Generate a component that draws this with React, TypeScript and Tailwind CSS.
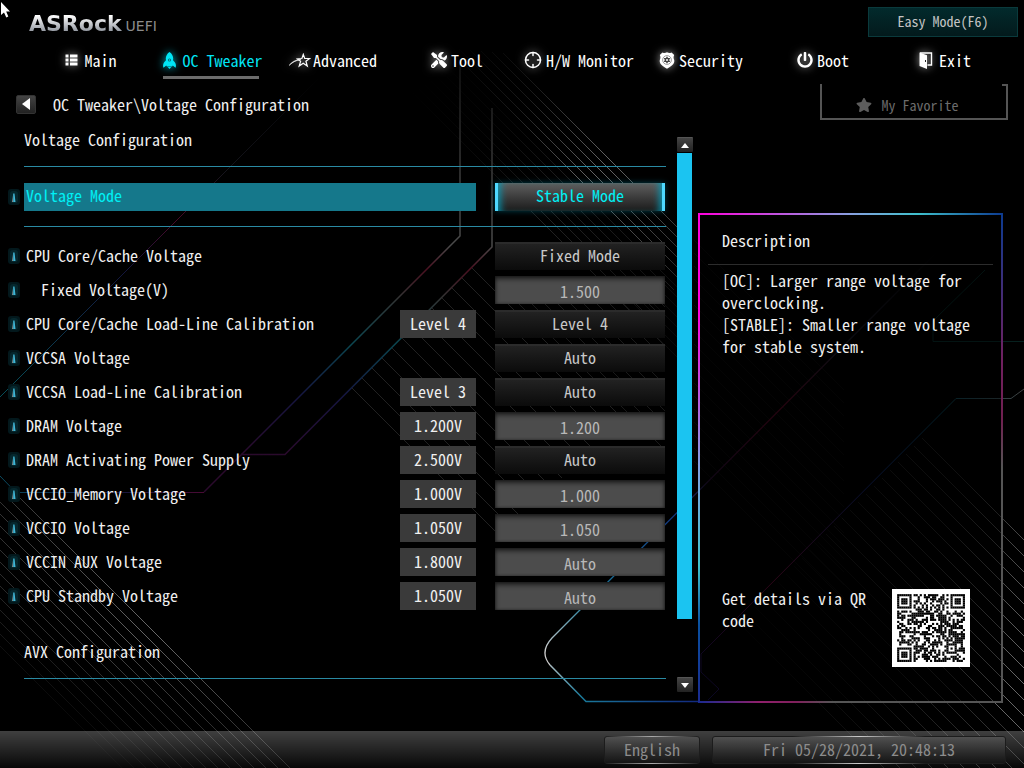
import React from "react";
import { Crosshair } from "lucide-react";
import { FaPowerOff, FaStar, FaTools } from "react-icons/fa";

const GLOW = "shrink-0 drop-shadow-[0_0_4px_rgba(255,255,255,0.6)]";

function ListIcon() {
  return (
    <svg className={GLOW} width="13" height="12" viewBox="0 0 13 12" fill="#fff" aria-hidden="true">
      {[0, 4, 8].map((y) => (
        <g key={y}>
          <rect x="0.5" y={y + 0.5} width="3" height="3" />
          <rect x="5" y={y + 0.5} width="7.5" height="3" />
        </g>
      ))}
    </svg>
  );
}

function RocketIcon() {
  return (
    <svg
      className="shrink-0 drop-shadow-[0_0_4px_rgba(0,229,255,0.8)]"
      width="13"
      height="17"
      viewBox="0 0 13 17"
      fill="#00e5f5"
      aria-hidden="true"
    >
      <path
        fillRule="evenodd"
        d="M6.5 0C8.800 1.600 10.200 4 10.200 6.500L10 8.200 12 10.400C12.900 11.600 13.300 13.800 12.500 15.800L9.800 13.600 9 14.400H4L3.200 13.600.5 15.800C-.3 13.800.1 11.600 1 10.400L3 8.200 2.800 6.500C2.800 4 4.200 1.600 6.500 0ZM6.500 6.400A1.600 1.600 0 1 0 6.500 9.600 1.600 1.600 0 1 0 6.500 6.400Z"
      />
      <circle cx="6.5" cy="8" r="0.8" />
      <path d="M4.800 15H8.200L6.500 17Z" />
    </svg>
  );
}

function ShootingStarIcon() {
  return (
    <svg className={GLOW} width="22" height="15" viewBox="0 0 22 15" fill="none" stroke="#fff" aria-hidden="true">
      <path
        d="M14.3 1.4 15.7 5.4 20.6 5.5 16.9 8.2 18.3 13 14.2 10.3 10.2 13 11.6 8.3 8.4 6 12.9 5.5Z"
        strokeWidth="1.2"
      />
      <path d="M0 12.6C2.8 8.6 6.6 6.5 12 6.4 7 7.4 3.4 9.2 0 12.6Z" fill="#fff" strokeWidth="0.5" />
    </svg>
  );
}

function BadgeIcon() {
  return (
    <svg className={GLOW} width="16" height="17" viewBox="0 0 16 17" aria-hidden="true">
      <path
        d="M3.500 .5C5 1.300 6.600 1.200 8 .3 9.400 1.200 11 1.300 12.500 .5L15.200 3C14.300 4.800 14.400 6.200 15.200 8 16 11.500 12.600 14.300 8 16.700 3.400 14.300 0 11.500 .8 8 1.600 6.200 1.700 4.800 .8 3Z"
        fill="#fff"
      />
      <circle cx="8" cy="8" r="4.400" fill="none" stroke="#777" strokeWidth="0.700" />
      <path
        d="M8 4.200 9.100 6.100 11.300 6.100 10.200 8 11.300 9.900 9.100 9.900 8 11.800 6.900 9.900 4.700 9.900 5.800 8 4.700 6.100 6.900 6.100Z"
        fill="#444"
      />
      <circle cx="8" cy="8" r="1" fill="#fff" />
    </svg>
  );
}

function DoorIcon() {
  return (
    <svg className={GLOW} width="14" height="17" viewBox="0 0 14 17" aria-hidden="true">
      <path d="M1 1H12.500V13H8.500" fill="none" stroke="#fff" strokeWidth="1.400" />
      <path d="M.5.5 8 3.200V17L.5 14Z" fill="#fff" />
      <rect x="6" y="8" width="1" height="2" fill="#222" />
    </svg>
  );
}

const NAV: { label: string; icon: React.ReactNode; active?: boolean; gap?: string }[] = [
  { label: "Main", icon: <ListIcon />, gap: "gap-[6px]" },
  { label: "OC Tweaker", icon: <RocketIcon />, active: true, gap: "gap-[6px]" },
  { label: "Advanced", icon: <ShootingStarIcon />, gap: "gap-0.5 pr-1" },
  { label: "Tool", icon: <FaTools className={GLOW} size={16} /> },
  { label: "H/W Monitor", icon: <Crosshair className={GLOW} size={18} strokeWidth={2} /> },
  { label: "Security", icon: <BadgeIcon /> },
  { label: "Boot", icon: <FaPowerOff className={GLOW} size={16} /> },
  { label: "Exit", icon: <DoorIcon />, gap: "gap-[6px]" },
];

type Setting = {
  id: string;
  label: string;
  current?: string;
  value: string;
  kind: "select" | "input";
  indent?: boolean;
};

const SETTINGS: Setting[] = [
  { id: "core", label: "CPU Core/Cache Voltage", value: "Fixed Mode", kind: "select" },
  { id: "fixed", label: "Fixed Voltage(V)", value: "1.500", kind: "input", indent: true },
  { id: "core-llc", label: "CPU Core/Cache Load-Line Calibration", current: "Level 4", value: "Level 4", kind: "select" },
  { id: "vccsa", label: "VCCSA Voltage", value: "Auto", kind: "select" },
  { id: "vccsa-llc", label: "VCCSA Load-Line Calibration", current: "Level 3", value: "Auto", kind: "select" },
  { id: "dram", label: "DRAM Voltage", current: "1.200V", value: "1.200", kind: "input" },
  { id: "dram-act", label: "DRAM Activating Power Supply", current: "2.500V", value: "Auto", kind: "select" },
  { id: "vccio-mem", label: "VCCIO_Memory Voltage", current: "1.000V", value: "1.000", kind: "input" },
  { id: "vccio", label: "VCCIO Voltage", current: "1.050V", value: "1.050", kind: "input" },
  { id: "vccin", label: "VCCIN AUX Voltage", current: "1.800V", value: "Auto", kind: "input" },
  { id: "standby", label: "CPU Standby Voltage", current: "1.050V", value: "Auto", kind: "input" },
];

function InfoMark() {
  return (
    <svg className="ml-2 h-4 w-3 shrink-0" viewBox="0 0 12 16" aria-hidden="true">
      <rect width="12" height="16" rx="3" fill="#03181c" />
      <rect x="2" y="2" width="8" height="12" rx="3" fill="#06282e" />
      <path d="M4 13 5.200 5V13Z" fill="#888" />
      <path d="M5.200 4.500H6.500L7.500 13H5.200Z" fill="#3fb6d6" />
    </svg>
  );
}

function SettingRow({ s }: { s: Setting }) {
  return (
    <div className="flex h-7 items-center pr-px">
      <InfoMark />
      <label htmlFor={s.id} className={s.indent ? "flex-1 pb-[2px] pl-[21px]" : "flex-1 pb-[2px] pl-[6px]"}>
        {s.label}
      </label>
      {s.current && (
        <output className="flex h-7 w-[76px] items-center justify-center bg-[#3a3a3a] pb-[2px]">{s.current}</output>
      )}
      {s.kind === "select" ? (
        <select
          id={s.id}
          className="ml-[19px] h-7 w-[170px] appearance-none border-t-2 border-[#2b2b2b] bg-linear-to-b from-[#222] to-[#0b0b0b] pb-1 text-center text-[#c8c8c8] [text-align-last:center]"
        >
          <option>{s.value}</option>
        </select>
      ) : (
        <input
          id={s.id}
          defaultValue={s.value}
          className="ml-[19px] h-7 w-[170px] bg-[#4c4c4c] pt-[2px] text-center text-[#b8b8b8] shadow-[inset_0_3px_5px_rgba(0,0,0,0.6),inset_0_0_3px_rgba(0,0,0,0.5)]"
        />
      )}
    </div>
  );
}

const Rule = () => <hr className="ml-6 h-px border-0 bg-[#2a8aa3]" />;

/* 33x33 code: finder, timing and alignment patterns with a filled data area */
const QR_SIZE = 33;
function qrModules(): [number, number][] {
  const out: [number, number][] = [];
  let seed = 20210528;
  const ring = (dx: number, dy: number) => Math.max(Math.abs(dx), Math.abs(dy));
  for (let y = 0; y < QR_SIZE; y++) {
    for (let x = 0; x < QR_SIZE; x++) {
      seed = (Math.imul(seed, 1664525) + 1013904223) >>> 0;
      let dark = (seed >>> 16) % 100 < 53;
      if (x === 6 || y === 6) dark = (x + y) % 2 === 0;
      if (ring(x - 26, y - 26) <= 2) dark = ring(x - 26, y - 26) !== 1;
      for (const [cx, cy] of [[3, 3], [29, 3], [3, 29]]) {
        const r = ring(x - cx, y - cy);
        if (r <= 4) dark = r !== 2 && r !== 4;
      }
      if (dark) out.push([x, y]);
    }
  }
  return out;
}
const QR = qrModules();

function QrCode() {
  return (
    <svg className="h-[78px] w-[78px] shrink-0" viewBox="-2.500 -2.500 38 38" role="img" aria-label="QR code">
      <rect x="-2.500" y="-2.500" width="38" height="38" fill="#fff" />
      {QR.map(([x, y]) => (
        <rect key={`${x}-${y}`} x={x} y={y} width="1.050" height="1.050" fill="#000" />
      ))}
    </svg>
  );
}

const range = (n: number) => Array.from({ length: n }, (_, i) => i);

function Backdrop() {
  return (
    <svg
      className="pointer-events-none absolute inset-0 h-full w-full"
      viewBox="0 0 1024 768"
      preserveAspectRatio="none"
      fill="none"
      aria-hidden="true"
    >
      <defs>
        <linearGradient id="drop" gradientUnits="userSpaceOnUse" x1="0" y1="60" x2="0" y2="455">
          <stop offset="0" stopColor="#111" />
          <stop offset="0.3" stopColor="#3c3c3c" />
          <stop offset="0.47" stopColor="#4a4a4a" />
          <stop offset="0.53" stopColor="#4a1020" />
          <stop offset="0.6" stopColor="#333" />
          <stop offset="0.72" stopColor="#0b4650" />
          <stop offset="0.85" stopColor="#151540" />
          <stop offset="1" stopColor="#2a0a2c" />
        </linearGradient>
        <linearGradient id="left" gradientUnits="userSpaceOnUse" x1="320" y1="75" x2="0" y2="397">
          <stop offset="0" stopColor="#000" />
          <stop offset="0.3" stopColor="#15151c" />
          <stop offset="0.45" stopColor="#4a0a28" />
          <stop offset="0.6" stopColor="#14143c" />
          <stop offset="1" stopColor="#06505a" />
        </linearGradient>
        <linearGradient id="base" gradientUnits="userSpaceOnUse" x1="0" y1="0" x2="240" y2="0">
          <stop offset="0" stopColor="#0a4a60" />
          <stop offset="0.5" stopColor="#16163c" />
          <stop offset="0.85" stopColor="#4a0a34" />
          <stop offset="1" stopColor="#1c1c3c" />
        </linearGradient>
        <linearGradient id="hook" gradientUnits="userSpaceOnUse" x1="942" y1="247" x2="545" y2="652">
          <stop offset="0" stopColor="#000" />
          <stop offset="0.25" stopColor="#161620" />
          <stop offset="0.4" stopColor="#3a0618" />
          <stop offset="0.58" stopColor="#1a0a20" />
          <stop offset="0.68" stopColor="#123a80" />
          <stop offset="0.88" stopColor="#1a7a9a" />
          <stop offset="1" stopColor="#ccc" />
        </linearGradient>
        <linearGradient id="hookEnd" gradientUnits="userSpaceOnUse" x1="545" y1="652" x2="697" y2="701">
          <stop offset="0" stopColor="#ccc" />
          <stop offset="0.3" stopColor="#1a7a9a" />
          <stop offset="1" stopColor="#122a80" />
        </linearGradient>
        <linearGradient id="right" gradientUnits="userSpaceOnUse" x1="1024" y1="388" x2="700" y2="700">
          <stop offset="0" stopColor="#444" />
          <stop offset="0.15" stopColor="#063440" />
          <stop offset="0.4" stopColor="#0e1c50" />
          <stop offset="0.7" stopColor="#4a0a28" />
          <stop offset="1" stopColor="#0c0c3c" />
        </linearGradient>
        <linearGradient id="hatchTop" gradientUnits="userSpaceOnUse" x1="450" y1="50" x2="690" y2="300">
          <stop offset="0" stopColor="#fff" stopOpacity="0" />
          <stop offset="0.25" stopColor="#fff" stopOpacity="0.1" />
          <stop offset="0.55" stopColor="#fff" stopOpacity="0.4" />
          <stop offset="1" stopColor="#fff" stopOpacity="0.12" />
        </linearGradient>
        <linearGradient id="hatchLow" gradientUnits="userSpaceOnUse" x1="0" y1="470" x2="0" y2="768">
          <stop offset="0" stopColor="#fff" stopOpacity="0.18" />
          <stop offset="0.55" stopColor="#fff" stopOpacity="0.42" />
          <stop offset="1" stopColor="#fff" stopOpacity="0.14" />
        </linearGradient>
        <linearGradient id="hatchRight" gradientUnits="userSpaceOnUse" x1="740" y1="540" x2="1024" y2="660">
          <stop offset="0" stopColor="#fff" stopOpacity="0.03" />
          <stop offset="0.6" stopColor="#fff" stopOpacity="0.14" />
          <stop offset="1" stopColor="#fff" stopOpacity="0.5" />
        </linearGradient>
      </defs>

      <g stroke="url(#hatchTop)">
        {range(14).map((i) => (
          <path key={i} d={`M${360 + i * 11} ${40 + i}L${690} ${370 - i * 10}`} strokeOpacity={i < 8 ? 0.35 : 1} />
        ))}
      </g>
      <g stroke="#fff" strokeOpacity="0.13">
        {range(13).map((i) => (
          <path key={i} d={`M${352 + i * 10} ${388 - i * 10}l${150} 150`} />
        ))}
        {range(14).map((i) => (
          <path key={i} d={`M${505 + i * 13} 290L${665} ${450 - i * 13}`} strokeOpacity="0.1" />
        ))}
      </g>
      <g stroke="url(#hatchLow)">
        {range(15).map((i) => (
          <path
            key={i}
            d={`M${i < 13 ? 0 : (i - 12) * 8} ${646 - i * 12 + (i < 13 ? 0 : (i - 12) * 8)}L${122 + i * 12} 768`}
            strokeOpacity={0.15 + i * 0.06}
          />
        ))}
      </g>
      <g stroke="url(#hatchRight)">
        {range(24).map((i) => (
          <path key={i} d={`M${922 - i * 8} ${438 + i * 8}l300 300`} strokeOpacity={i > 12 ? 0.4 : 0.8} />
        ))}
      </g>
      <g stroke="#fff" strokeOpacity="0.03">
        {range(18).map((i) => (
          <path key={i} d={`M694 ${240 + i * 13}l150 150`} />
        ))}
      </g>

      <path d="M460 60V236L204 492" stroke="url(#drop)" strokeWidth="1.500" />
      <path d="M492 108V247L285 454.500H241" stroke="url(#drop)" strokeWidth="1.500" />
      <path d="M204 492.500H16L0 476" stroke="url(#base)" />
      <path d="M320 77 0 397" stroke="url(#left)" />
      <path d="M942 247 552 638Q539 652 550 665" stroke="url(#hook)" strokeWidth="1.300" />
      <path d="M550 665 586 701.500H698" stroke="url(#hookEnd)" strokeWidth="1.500" />
      <path d="M1024 389 1011 398.500H956L701 654V672L719 689 708 700" stroke="url(#right)" />
      <path d="M985 270 933 321V341.500H1024" stroke="#06201e" />
    </svg>
  );
}

const SCROLL_BUTTON =
  "flex h-[15px] w-4 items-center justify-center rounded-[1px] border-t border-[#555] bg-linear-to-b from-[#444] to-[#222]";

export default function App() {
  return (
    <div className="relative flex min-h-screen flex-col overflow-hidden bg-black font-['Noto_Sans_Mono_CJK_JP','Liberation_Mono',monospace] text-[16px] leading-[22px] text-[#f0f0f0]">
      <Backdrop />
      <svg className="absolute top-0 left-0" width="12" height="20" viewBox="0 0 12 20" aria-hidden="true">
        <path d="M1 2V15L4 12.500 6.300 17.500 8.300 16.500 6.200 11.500H10Z" fill="#fff" />
      </svg>

      <header className="relative">
        <div className="flex items-start justify-between pt-[7px] pr-[6px] pl-[29px]">
          <div className="flex items-baseline gap-1 pt-[3px] font-['DejaVu_Sans',sans-serif]">
            <span className="bg-linear-to-b from-[#ffffff] from-20% to-[#7c828c] to-90% bg-clip-text text-[22px] leading-7 font-bold text-transparent">
              ASRock
            </span>
            <span className="text-[14px] text-[#8c8c8c]">UEFI</span>
          </div>
          <button className="h-[30px] w-[150px] border border-[#0a3a3c] bg-linear-to-b from-[#022a2c] to-[#031a1c] pb-[2px] text-[14px] text-[#c4c4c4]">
            Easy Mode(F6)
          </button>
        </div>
        <nav className="mt-[6px] grid grid-cols-8 pr-[18px] pl-[30px]">
          {NAV.map((n) => (
            <a
              key={n.label}
              href="#"
              className={`relative flex h-8 items-center justify-center whitespace-nowrap ${n.gap ?? "gap-1"} ${n.active ? "text-[#00e5f5]" : "text-white"}`}
            >
              {n.icon}
              {n.label}
              {n.active && <span className="absolute -bottom-[3px] left-[11px] h-[3px] w-24 bg-[#6c6c6c]" />}
            </a>
          ))}
        </nav>
      </header>

      <div className="relative mt-2 flex h-9 items-stretch pr-4 pl-4">
        <div className="flex flex-1 items-center gap-[17px] pt-1">
          <button
            aria-label="Back"
            className="flex h-[19px] w-5 items-center justify-center rounded-[2px] border border-[#333] bg-linear-to-b from-[#444] to-[#222]"
          >
            <svg width="8" height="12" viewBox="0 0 8 12" fill="#fff" aria-hidden="true">
              <path d="M8 0V12L0 6Z" />
            </svg>
          </button>
          <h1>OC Tweaker\Voltage Configuration</h1>
        </div>
        <button className="relative flex w-[188px] items-center justify-center gap-[10px] border-x-2 border-b-2 border-[#555] pt-2 pr-[14px] text-[14px] text-[#6c6c6c]">
          <span className="absolute top-0 right-0 h-[2px] w-1 bg-[#555]" />
          <FaStar size={16} className="text-[#5c5c5c]" />
          My Favorite
        </button>
      </div>

      <main className="relative flex flex-1 pt-[6px] pr-[21px]">
        <form className="flex-1">
          <h2 className="mb-3 flex h-7 items-center pb-[2px] pl-6">Voltage Configuration</h2>
          <Rule />
          <div className="mt-4 mb-[15px] flex h-7 items-center pr-px">
            <InfoMark />
            <label
              htmlFor="mode"
              className="ml-1 flex h-7 flex-1 items-center bg-[#15788b] pb-1 pl-[2px] text-[#00f0f5]"
            >
              Voltage Mode
            </label>
            <select
              id="mode"
              className="ml-[19px] h-7 w-[170px] appearance-none border-x-[3px] border-[#4fd8ff] bg-linear-to-b from-[#606060] to-[#1c1c1c] pb-1 text-center text-[#00f0f5] shadow-[0_0_6px_rgba(0,160,190,0.4),inset_8px_0_7px_-5px_rgba(0,160,190,0.8),inset_-8px_0_7px_-5px_rgba(0,160,190,0.8)] [text-align-last:center]"
            >
              <option>Stable Mode</option>
            </select>
          </div>
          <Rule />
          <div className="mt-[15px] flex flex-col gap-[6px]">
            {SETTINGS.map((s) => (
              <SettingRow key={s.id} s={s} />
            ))}
          </div>
          <h2 className="mt-7 mb-3 flex h-7 items-center pb-[2px] pl-6">AVX Configuration</h2>
          <Rule />
        </form>

        <div className="mt-[11px] mb-[39px] ml-[11px] flex w-4 flex-col items-center">
          <button aria-label="Scroll up" className={SCROLL_BUTTON}>
            <svg width="8" height="5" viewBox="0 0 8 5" fill="#fff" aria-hidden="true">
              <path d="M4 0 8 5H0Z" />
            </svg>
          </button>
          <div className="flex w-full flex-1 flex-col pt-px pr-px">
            <div className="h-[89%] bg-[#1bc4f1]" />
          </div>
          <button aria-label="Scroll down" className={SCROLL_BUTTON}>
            <svg width="8" height="5" viewBox="0 0 8 5" fill="#fff" aria-hidden="true">
              <path d="M4 5 8 0H0Z" />
            </svg>
          </button>
        </div>

        <aside className="mt-[87px] mb-7 ml-[5px] flex w-[305px] flex-col px-[10px] [background:linear-gradient(90deg,#f0d,#88a0e0_50%,#3fc0cc_72%,#0c3a90)_top/100%_2px_no-repeat,linear-gradient(180deg,#f0d_20%,#80a0e0_52%,#3fc0cc_72%,#0a50a0_84%,#1a2a90)_left/2px_100%_no-repeat,linear-gradient(180deg,#0c3a90,#702060_30%,#702050_42%,#555_52%)_right/2px_100%_no-repeat,linear-gradient(90deg,#1a2a90,#90206c_20%,#80205c_32%,#555_44%)_bottom/100%_2px_no-repeat,rgba(0,0,0,0.4)]">
          <h2 className="border-b border-[#2c2c2c] pt-4 pb-[13px] pl-[14px]">Description</h2>
          <p className="pt-1 pl-[14px]">[OC]: Larger range voltage for overclocking.</p>
          <p className="pl-[14px]">[STABLE]: Smaller range voltage for stable system.</p>
          <div className="mt-auto flex items-center justify-between pr-[23px] pb-[34px] pl-[14px]">
            <p className="w-40 pb-[38px]">Get details via QR code</p>
            <QrCode />
          </div>
        </aside>
      </main>

      <footer className="relative flex h-[37px] items-center justify-end gap-3 bg-linear-to-b from-white/25 to-white/3 pr-[18px] text-[#8c8c8c]">
        <button className="relative h-7 w-24 rounded-[3px] border border-[#1c1c1c] bg-linear-to-b from-[#505050] to-[#151515] pb-[2px]">
          <span className="absolute inset-x-0 -top-px h-px bg-linear-to-r from-transparent via-[#aaa] to-transparent" />
          <span className="absolute inset-x-0 -bottom-px h-px bg-linear-to-r from-transparent via-[#aaa] to-transparent" />
          English
        </button>
        <div className="relative flex h-7 w-[294px] items-center justify-center rounded-[3px] border border-[#1c1c1c] bg-linear-to-b from-[#505050] to-[#151515] pb-[2px]">
          <span className="absolute inset-x-20 -top-px h-px bg-linear-to-r from-transparent via-[#ccc] to-transparent" />
          <span className="absolute inset-x-20 -bottom-px h-px bg-linear-to-r from-transparent via-[#ccc] to-transparent" />
          <time dateTime="2021-05-28T20:48:13">Fri 05/28/2021, 20:48:13</time>
        </div>
      </footer>
    </div>
  );
}
